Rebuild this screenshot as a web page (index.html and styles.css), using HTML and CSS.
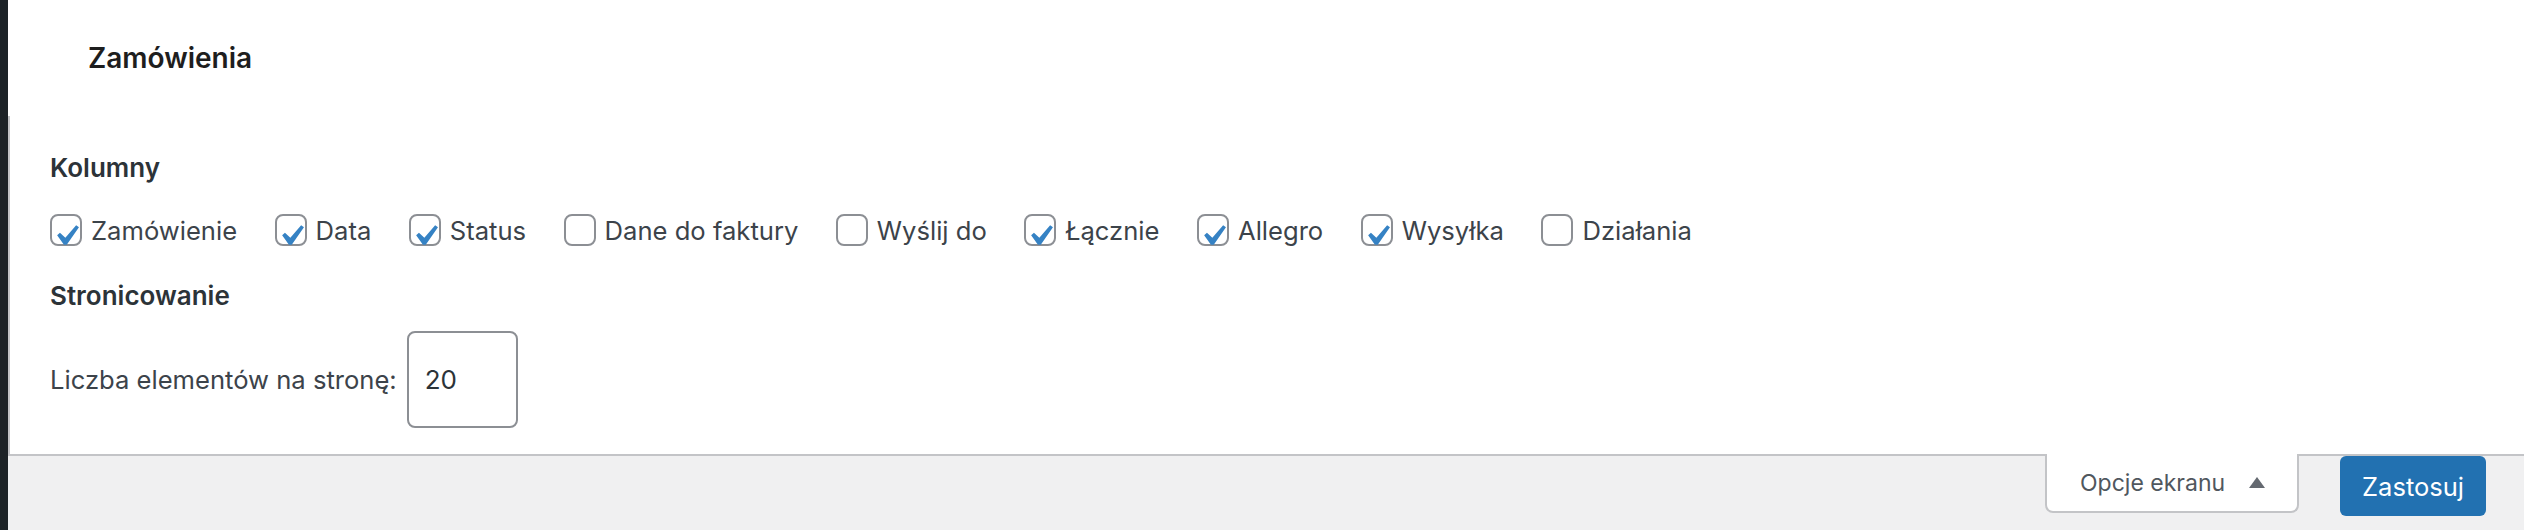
FILE: index.html
```html
<!DOCTYPE html>
<html lang="pl">
<head>
    <meta charset="UTF-8">
    <meta name="viewport" content="width=device-width, initial-scale=1.0">
    <title>Zamówienia</title>
    <link rel="stylesheet" href="styles.css">
</head>
<body>
    <div class="admin">
        <div class="sidebar"></div>
        <div class="main">
            <header class="wc-header">
                <h1>Zamówienia</h1>
            </header>

            <!-- Screen options panel -->
            <div class="screen-meta">
                <div class="legend">Kolumny</div>
                <div class="columns">
                    <label class="opt"><span class="cb"><svg viewBox="0 0 20 20"><path d="M14.83 4.89l1.34.94-5.81 8.38H9.02L5.78 9.67l1.34-1.25 2.57 2.4z"/></svg></span>Zamówienie</label>
                    <label class="opt"><span class="cb"><svg viewBox="0 0 20 20"><path d="M14.83 4.89l1.34.94-5.81 8.38H9.02L5.78 9.67l1.34-1.25 2.57 2.4z"/></svg></span>Data</label>
                    <label class="opt"><span class="cb"><svg viewBox="0 0 20 20"><path d="M14.83 4.89l1.34.94-5.81 8.38H9.02L5.78 9.67l1.34-1.25 2.57 2.4z"/></svg></span>Status</label>
                    <label class="opt"><span class="cb"></span>Dane do faktury</label>
                    <label class="opt"><span class="cb"></span>Wyślij do</label>
                    <label class="opt"><span class="cb"><svg viewBox="0 0 20 20"><path d="M14.83 4.89l1.34.94-5.81 8.38H9.02L5.78 9.67l1.34-1.25 2.57 2.4z"/></svg></span>Łącznie</label>
                    <label class="opt"><span class="cb"><svg viewBox="0 0 20 20"><path d="M14.83 4.89l1.34.94-5.81 8.38H9.02L5.78 9.67l1.34-1.25 2.57 2.4z"/></svg></span>Allegro</label>
                    <label class="opt"><span class="cb"><svg viewBox="0 0 20 20"><path d="M14.83 4.89l1.34.94-5.81 8.38H9.02L5.78 9.67l1.34-1.25 2.57 2.4z"/></svg></span>Wysyłka</label>
                    <label class="opt"><span class="cb"></span>Działania</label>
                </div>

                <div class="legend pages-legend">Stronicowanie</div>
                <label class="per-page">Liczba elementów na stronę: <input type="text" value="20"></label>
            </div>

            <!-- Tab and apply button -->
            <div class="meta-links">
                <button type="button" class="tab">Opcje ekranu <span class="arrow"></span></button>
                <button type="button" class="apply">Zastosuj</button>
            </div>
        </div>
    </div>
</body>
</html>
```

FILE: styles.css
```css
body {
    margin: 0;
    font-family: Inter, "Noto Sans", sans-serif;
    background-color: #f0f0f1;
    color: #3c434a;
}
.admin {
    display: flex;
    height: 530px;
}
.sidebar {
    width: 8px;
    flex-shrink: 0;
    background-color: #1d2327;
}
.main {
    flex: 1;
}
.wc-header {
    height: 116px;
    background-color: white;
    display: flex;
    align-items: center;
    padding-left: 80px;
}
.wc-header h1 {
    margin: 0;
    font-size: 28px;
    font-weight: 600;
    line-height: 40px;
    color: #1e1e1e;
}
.screen-meta {
    background-color: white;
    border-left: 2px solid #c3c4c7;
    border-bottom: 2px solid #c3c4c7;
    padding: 32px 40px 26px;
}
.legend {
    font-size: 26px;
    font-weight: 600;
    line-height: 40px;
    color: #2c3338;
}
.pages-legend {
    margin-top: 22px;
}
.columns {
    display: flex;
    align-items: center;
    height: 48px;
    margin-top: 18px;
}
.opt {
    display: flex;
    align-items: center;
    font-size: 25.6px;
    margin-right: 37.5px;
}
.cb {
    position: relative;
    width: 32px;
    height: 32px;
    box-sizing: border-box;
    border: 2px solid #8c8f94;
    border-radius: 8px;
    margin-right: 9px;
    background-color: white;
}
.cb svg {
    position: absolute;
    left: -7px;
    top: -1px;
    width: 42px;
    height: 42px;
    fill: #3582c4;
}
.per-page {
    display: flex;
    align-items: center;
    gap: 10px;
    margin-top: 15px;
    font-size: 25.6px;
}
.per-page input {
    width: 111px;
    height: 97px;
    box-sizing: border-box;
    border: 2px solid #8c8f94;
    border-radius: 8px;
    padding: 0 16px;
    font-family: inherit;
    font-size: 26px;
    color: #2c3338;
}
.meta-links {
    display: flex;
    justify-content: flex-end;
    align-items: flex-start;
    gap: 41px;
    padding-right: 38px;
}
.tab {
    display: flex;
    align-items: center;
    margin-top: -2px;
    height: 59px;
    background-color: white;
    border: 2px solid #c3c4c7;
    border-top: none;
    border-radius: 0 0 8px 8px;
    padding: 0 32px 0 33px;
    font-family: inherit;
    font-size: 23px;
    color: #50575e;
}
.arrow {
    margin-left: 24px;
    border-left: 8.5px solid transparent;
    border-right: 8.5px solid transparent;
    border-bottom: 11px solid #646970;
}
.apply {
    height: 60px;
    padding: 0 22px;
    border: none;
    border-radius: 6px;
    background-color: #2271b1;
    color: white;
    font-family: inherit;
    font-size: 25.5px;
}
```
